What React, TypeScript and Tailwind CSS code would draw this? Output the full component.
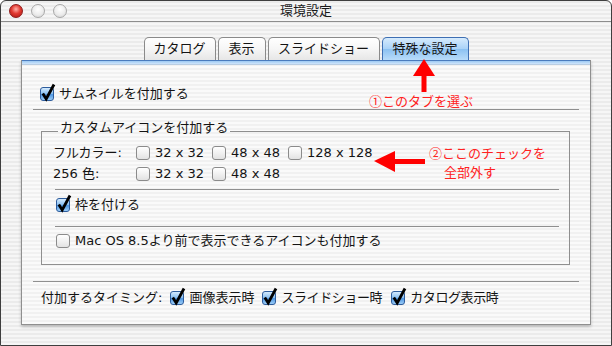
import React from "react";

const stripes =
  "bg-[repeating-linear-gradient(180deg,#ebebeb_0px,#ebebeb_2px,#f6f6f6_2px,#f6f6f6_4px)]";
const panelStripes =
  "bg-[repeating-linear-gradient(180deg,#f1f1f1_0px,#f1f1f1_2px,#fafafa_2px,#fafafa_4px)]";

function Box({ on = false }: { on?: boolean }) {
  return (
    <span
      className={
        "relative inline-block w-[14px] h-[14px] shrink-0 rounded-[3px] border " +
        (on
          ? "border-[#2d5c9c] bg-[linear-gradient(180deg,#d4eafd_0%,#8fc3f2_45%,#4f97e3_55%,#9ccdf7_100%)]"
          : "border-[#8b8b8b] bg-[linear-gradient(180deg,#ffffff_0%,#f1f1f1_50%,#e2e2e2_100%)]")
      }
    >
      {on && (
        <svg
          className="absolute left-[-1px] top-[-5px] overflow-visible"
          width="16"
          height="19"
          viewBox="0 0 16 19"
        >
          <path
            d="M2.8 10.5 L6.2 16 L14 1.5"
            fill="none"
            stroke="#000"
            strokeWidth="2.8"
            strokeLinejoin="miter"
            strokeLinecap="butt"
          />
        </svg>
      )}
    </span>
  );
}

function Option({ on = false, children }: { on?: boolean; children: React.ReactNode }) {
  return (
    <span className="flex items-center gap-[5px]">
      <Box on={on} />
      <span>{children}</span>
    </span>
  );
}

function Light({ color }: { color: "red" | "gray" }) {
  return (
    <span
      className={
        "w-[14px] h-[14px] rounded-full border " +
        (color === "red"
          ? "border-[#8e1b1b] bg-[radial-gradient(circle_at_50%_35%,#ffb0a8_0%,#e23a32_45%,#a8150f_100%)]"
          : "border-[#a8a8a8] bg-[radial-gradient(circle_at_50%_35%,#ffffff_0%,#ececec_55%,#cfcfcf_100%)]")
      }
    />
  );
}

const TABS = [
  { label: "カタログ", w: "w-[72px]" },
  { label: "表示", w: "w-[48px]" },
  { label: "スライドショー", w: "w-[112px]" },
];

export default function App() {
  return (
    <div
      className={
        "relative w-[612px] h-[346px] overflow-hidden border border-[#3f3f3f] rounded-t-[6px] text-[13px] leading-[16px] text-[#141414] font-['DejaVu_Sans','Noto_Sans_CJK_JP',sans-serif] " +
        stripes
      }
    >
      {/* Title bar */}
      <div className="h-[21px] grid grid-cols-[1fr_auto_1fr] items-center border-b border-[#8d8d8d]">
        <div className="flex items-center gap-[8px] pl-[8px]">
          <Light color="red" />
          <Light color="gray" />
          <Light color="gray" />
        </div>
        <div className="text-[#1a1a1a]">環境設定</div>
        <div />
      </div>

      {/* Body */}
      <div className="px-[20px] pt-[15px]">
        <div className="flex justify-center gap-[2px] h-[23px]">
          {TABS.map((t) => (
            <div
              key={t.label}
              className={
                t.w +
                " flex items-center justify-center rounded-t-[5px] border border-b-0 border-[#8a8a8a] bg-[linear-gradient(180deg,#ffffff_0%,#f6f6f6_50%,#e6e6e6_100%)]"
              }
            >
              {t.label}
            </div>
          ))}
          <div className="w-[87px] flex items-center justify-center rounded-t-[5px] border border-b-0 border-[#3e6fb3] bg-[linear-gradient(180deg,#d6ebfd_0%,#a9d2f7_50%,#8cc2f2_52%,#b9dcfa_100%)]">
            特殊な設定
          </div>
        </div>

        {/* Panel */}
        <div
          className={
            "h-[265px] border border-t-0 border-[#8f8f8f] shadow-[0_2px_3px_rgba(0,0,0,0.22)] " +
            panelStripes
          }
        >
          <div className="h-[5px] border-t border-[#4a7bbd] bg-[linear-gradient(180deg,#9cc8f2_0%,#cfe5fb_100%)] border-b border-b-[#b9cde2]" />

          <div className="mt-[19px] h-[20px] pl-[18px] flex items-center">
            <Option on>サムネイルを付加する</Option>
          </div>

          <div className="mt-[5px] mx-[11px] h-px bg-[#8f8f8f]" />

          <fieldset className="mt-[13px] ml-[19px] mr-[20px] h-[142px] border border-[#8f8f8f] px-[11px] pt-[4px]">
            <legend className="ml-[5px] px-[2px] leading-[16px] -translate-y-[3px]">カスタムアイコンを付加する</legend>

            <div className="h-[20px] flex items-center">
              <span className="w-[83px]">フルカラー:</span>
              <span className="w-[76px]"><Option>32 x 32</Option></span>
              <span className="w-[76px]"><Option>48 x 48</Option></span>
              <Option>128 x 128</Option>
            </div>
            <div className="mt-[1px] h-[20px] flex items-center">
              <span className="w-[83px]">256 色:</span>
              <span className="w-[76px]"><Option>32 x 32</Option></span>
              <span className="w-[76px]"><Option>48 x 48</Option></span>
            </div>

            <div className="mt-[5px] ml-[2px] mr-[-1px] h-px bg-[#8f8f8f]" />

            <div className="mt-[5px] h-[20px] pl-[3px] flex items-center">
              <Option on>枠を付ける</Option>
            </div>

            <div className="mt-[11px] ml-[2px] mr-[-1px] h-px bg-[#8f8f8f]" />

            <div className="mt-[4px] h-[20px] pl-[3px] flex items-center">
              <Option>Mac OS 8.5より前で表示できるアイコンも付加する</Option>
            </div>
          </fieldset>

          <div className="mt-[16px] mx-[11px] h-px bg-[#8f8f8f]" />

          <div className="mt-[6px] h-[20px] pl-[19px] flex items-center">
            <span className="mr-[8px]">付加するタイミング:</span>
            <span className="mr-[8px]"><Option on>画像表示時</Option></span>
            <span className="mr-[9px] tracking-[-0.4px]"><Option on>スライドショー時</Option></span>
            <span className="tracking-[-0.4px]"><Option on>カタログ表示時</Option></span>
          </div>
        </div>
      </div>

      {/* Annotation 1 */}
      <svg className="absolute left-[410px] top-[58px]" width="26" height="34" viewBox="0 0 26 34">
        <polygon points="13,0 24,17 2,17" fill="#ff0000" />
        <rect x="10.5" y="16" width="5" height="17" fill="#ff0000" />
      </svg>
      <div className="absolute left-[368px] top-[92px] text-[#f22] leading-[16px] font-['Noto_Sans_CJK_JP',sans-serif]">①このタブを選ぶ</div>

      {/* Annotation 2 */}
      <svg className="absolute left-[373px] top-[149px]" width="52" height="24" viewBox="0 0 52 24">
        <polygon points="0,11 21,1 21,22" fill="#ff0000" />
        <rect x="20" y="9" width="31" height="5" fill="#ff0000" />
      </svg>
      <div className="absolute left-[428px] top-[144px] text-[#f22] leading-[16px] font-['Noto_Sans_CJK_JP',sans-serif]">②ここのチェックを</div>
      <div className="absolute left-[443px] top-[163px] text-[#f22] leading-[16px] font-['Noto_Sans_CJK_JP',sans-serif]">全部外す</div>
    </div>
  );
}
